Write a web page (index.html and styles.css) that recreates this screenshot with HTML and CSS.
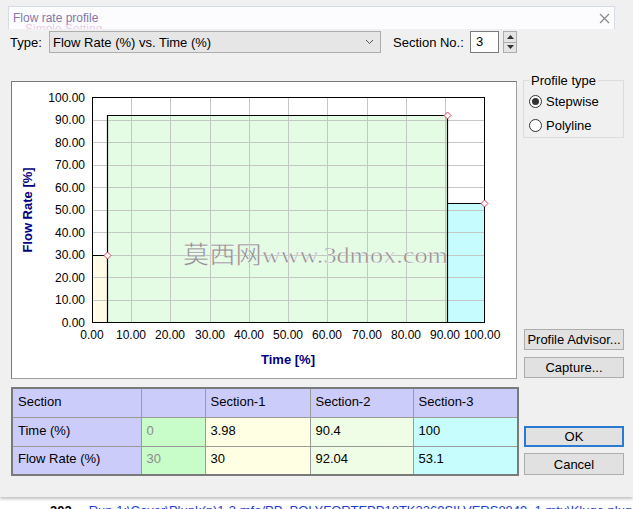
FILE: index.html
```html
<!DOCTYPE html>
<html lang="en">
<head>
    <meta charset="UTF-8">
    <title>Flow rate profile</title>
    <link rel="stylesheet" href="styles.css">
</head>
<body>
    <div class="dialog">
        <div class="titlebar">
            <span class="title">Flow rate profile</span>
            <span class="ghost">Simple Setting...</span>
            <svg class="close" width="11" height="11" viewBox="0 0 11 11">
                <path d="M1 1 L10 10 M10 1 L1 10" stroke="#8a8a8a" stroke-width="1.2" fill="none"/>
            </svg>
        </div>

        <div class="toolbar">
            <span class="type-label">Type:</span>
            <div class="combo">
                <span>Flow Rate (%) vs. Time (%)</span>
                <svg width="9" height="6" viewBox="0 0 9 6">
                    <path d="M1 1 L4.5 4.5 L8 1" stroke="#555" stroke-width="1" fill="none"/>
                </svg>
            </div>
            <span class="sec-label">Section No.:</span>
            <div class="spin-input">3</div>
            <div class="spin">
                <div class="spin-btn"><svg width="7" height="4" viewBox="0 0 7 4"><path d="M0 4 L3.5 0 L7 4 Z" fill="#333"/></svg></div>
                <div class="spin-btn"><svg width="7" height="4" viewBox="0 0 7 4"><path d="M0 0 L3.5 4 L7 0 Z" fill="#333"/></svg></div>
            </div>
        </div>

        <div class="main">
            <div class="left">
                <div class="chart">
                    <svg width="504" height="296" viewBox="0 0 504 296">
                        <!-- section fills -->
                        <rect x="80.5" y="173.5" width="15" height="67" fill="#fffbe4"/>
                        <rect x="95.5" y="33.5" width="340" height="207" fill="#e4fce4"/>
                        <rect x="435.5" y="121.5" width="37" height="119" fill="#c6fcfe"/>

                        <!-- grid -->
                        <g stroke="#c4c8c4" stroke-width="1">
                            <path d="M119.5 15.5 V240.5 M158.5 15.5 V240.5 M198.5 15.5 V240.5 M237.5 15.5 V240.5 M276.5 15.5 V240.5 M315.5 15.5 V240.5 M355.5 15.5 V240.5 M394.5 15.5 V240.5 M433.5 15.5 V240.5"/>
                            <path d="M80.5 38.5 H472.5 M80.5 60.5 H472.5 M80.5 83.5 H472.5 M80.5 105.5 H472.5 M80.5 128.5 H472.5 M80.5 150.5 H472.5 M80.5 173.5 H472.5 M80.5 195.5 H472.5 M80.5 218.5 H472.5"/>
                        </g>

                        <!-- watermark -->
                        <text class="watermark" x="171" y="181" textLength="265" lengthAdjust="spacingAndGlyphs">莫西网www.3dmox.com</text>

                        <!-- step outlines -->
                        <g fill="none" stroke="#000" stroke-width="1.2">
                            <path d="M80.5 173.5 H95.5 V240.5"/>
                            <path d="M95.5 173.5 V33.5 H435.5 V240.5"/>
                            <path d="M435.5 121.5 H472.5"/>
                        </g>
                        <rect x="80.5" y="15.5" width="392" height="225" fill="none" stroke="#000" stroke-width="1"/>

                        <!-- markers -->
                        <g fill="#fff" stroke="#d9405c" stroke-width="1">
                            <polygon points="95.5,170 99,173.5 95.5,177 92,173.5"/>
                            <polygon points="435.5,30 439,33.5 435.5,37 432,33.5"/>
                            <polygon points="472.5,118 476,121.5 472.5,125 469,121.5"/>
                        </g>

                        <!-- y axis labels -->
                        <g class="tick" text-anchor="end">
                            <text x="73" y="20">100.00</text>
                            <text x="73" y="42">90.00</text>
                            <text x="73" y="65">80.00</text>
                            <text x="73" y="87">70.00</text>
                            <text x="73" y="110">60.00</text>
                            <text x="73" y="132">50.00</text>
                            <text x="73" y="155">40.00</text>
                            <text x="73" y="177">30.00</text>
                            <text x="73" y="200">20.00</text>
                            <text x="73" y="222">10.00</text>
                            <text x="73" y="245">0.00</text>
                        </g>

                        <!-- x axis labels -->
                        <g class="tick" text-anchor="middle">
                            <text x="80" y="257">0.00</text>
                            <text x="119" y="257">10.00</text>
                            <text x="158" y="257">20.00</text>
                            <text x="198" y="257">30.00</text>
                            <text x="237" y="257">40.00</text>
                            <text x="276" y="257">50.00</text>
                            <text x="315" y="257">60.00</text>
                            <text x="355" y="257">70.00</text>
                            <text x="394" y="257">80.00</text>
                            <text x="433" y="257">90.00</text>
                            <text x="470" y="257">100.00</text>
                        </g>

                        <text class="axis-title" x="276" y="282" text-anchor="middle">Time [%]</text>
                        <text class="axis-title" text-anchor="middle" transform="translate(20 128) rotate(-90)">Flow Rate [%]</text>
                    </svg>
                </div>

                <table class="sections">
                    <colgroup>
                        <col class="c-name"><col class="c-start"><col class="c-s1"><col class="c-s2"><col class="c-s3">
                    </colgroup>
                    <tr class="head">
                        <td>Section</td><td></td><td>Section-1</td><td>Section-2</td><td>Section-3</td>
                    </tr>
                    <tr>
                        <td class="name">Time (%)</td>
                        <td class="start">0</td>
                        <td class="s1">3.98</td>
                        <td class="s2">90.4</td>
                        <td class="s3">100</td>
                    </tr>
                    <tr>
                        <td class="name">Flow Rate (%)</td>
                        <td class="start">30</td>
                        <td class="s1">30</td>
                        <td class="s2">92.04</td>
                        <td class="s3">53.1</td>
                    </tr>
                </table>
            </div>

            <div class="right">
                <fieldset class="group">
                    <legend>Profile type</legend>
                    <div class="radio-row"><span class="radio checked"></span>Stepwise</div>
                    <div class="radio-row"><span class="radio"></span>Polyline</div>
                </fieldset>
                <button class="btn advisor">Profile Advisor...</button>
                <button class="btn capture">Capture...</button>
                <button class="btn ok">OK</button>
                <button class="btn cancel">Cancel</button>
            </div>
        </div>
    </div>

    <div class="footer">
        <b>302</b><span class="link">Run 1:\Cover\Plunk(p)1-3.mfe/PP_POLYFORTEPP18TK3369SILVERS8849_1.mtu\Kluge plug 1-3_4.mus</span>
    </div>
</body>
</html>
```

FILE: styles.css
```css
body {
    margin: 0;
    width: 633px;
    height: 509px;
    overflow: hidden;
    background-color: #fff;
    font-family: "Liberation Sans", Arial, sans-serif;
    font-size: 13px;
    color: #000;
}

.dialog {
    height: 497px;
    box-sizing: border-box;
    padding-top: 6px;
    background-color: #f0f0f0;
    box-shadow: 0 2px 3px rgba(0, 0, 0, 0.25);
}

.titlebar {
    position: relative;
    overflow: hidden;
    margin-left: 8px;
    width: 607px;
    height: 23px;
    box-sizing: border-box;
    padding-left: 4px;
    display: flex;
    align-items: center;
    background-color: #fcfcfe;
    border: 1px solid #d6dce6;
    border-bottom: none;
}

.title {
    font-size: 12px;
    color: #8477a6;
}

.ghost {
    position: absolute;
    left: 16px;
    top: 15px;
    font-size: 12px;
    color: rgba(200, 130, 180, 0.4);
}

.close {
    position: absolute;
    right: 4px;
    top: 6px;
}

.toolbar {
    display: flex;
    align-items: center;
    height: 22px;
    margin-top: 2px;
    padding-left: 10px;
}

.type-label {
    width: 39px;
}

.combo {
    width: 332px;
    height: 22px;
    box-sizing: border-box;
    padding: 0 6px 0 3px;
    display: flex;
    align-items: center;
    justify-content: space-between;
    background-color: #e6e6e6;
    border: 1px solid #adadad;
}

.sec-label {
    margin-left: 12px;
    width: 77px;
}

.spin-input {
    width: 29px;
    height: 22px;
    box-sizing: border-box;
    padding-left: 5px;
    line-height: 20px;
    background-color: #fff;
    border: 1px solid #7a7a7a;
}

.spin {
    margin-left: 4px;
    width: 14px;
    height: 22px;
    display: flex;
    flex-direction: column;
}

.spin-btn {
    flex: 1;
    display: flex;
    align-items: center;
    justify-content: center;
    background-color: #e4e4e4;
    border: 1px solid #adadad;
}

.spin-btn + .spin-btn {
    border-top: none;
}

.main {
    display: flex;
    align-items: flex-start;
    margin-top: 28px;
    padding-left: 11px;
}

.left {
    width: 506px;
}

.chart {
    height: 298px;
    box-sizing: border-box;
    background-color: #fff;
    border: 1px solid #a0a0a0;
    border-top-color: #7a7a7a;
    border-left-color: #7a7a7a;
}

.chart svg {
    display: block;
}

.tick {
    font-family: "Liberation Sans", Arial, sans-serif;
    font-size: 12px;
    fill: #000;
}

.axis-title {
    font-family: "Liberation Sans", Arial, sans-serif;
    font-size: 13px;
    font-weight: bold;
    fill: #000080;
}

.watermark {
    font-family: "Liberation Serif", "Noto Sans CJK SC", serif;
    font-size: 24px;
    fill: #8e8e8e;
    stroke: #fff;
    stroke-width: 0.4;
}

.sections {
    margin-top: 8px;
    width: 506px;
    table-layout: fixed;
    border-collapse: collapse;
    border: 2px solid #7a7a7a;
}

.sections td {
    height: 29px;
    padding: 0 0 3px 5px;
    box-sizing: border-box;
    border: 1px solid #9a9a9a;
}

.c-name { width: 129px; }
.c-start { width: 64px; }
.c-s1 { width: 105px; }
.c-s2 { width: 103px; }
.c-s3 { width: 105px; }

.head td,
.sections .name {
    background-color: #ccccfb;
}

.sections .start {
    background-color: #c8fcc8;
    color: #8c8c8c;
}

.sections .s1 {
    background-color: #ffffe4;
}

.sections .s2 {
    background-color: #effde6;
}

.sections .s3 {
    background-color: #c8fdfe;
}

.right {
    display: flex;
    flex-direction: column;
    margin-left: 6px;
    margin-top: -7px;
    width: 101px;
}

.group {
    margin: 0;
    height: 64px;
    box-sizing: border-box;
    padding: 2px 0 0 5px;
    border: 1px solid #dcdcdc;
}

.group legend {
    padding: 0 2px;
    line-height: 13px;
}

.radio-row {
    display: flex;
    align-items: center;
    height: 24px;
}

.radio {
    width: 11px;
    height: 11px;
    margin-right: 4px;
    border: 1px solid #333;
    border-radius: 50%;
    background-color: #fff;
    display: flex;
    align-items: center;
    justify-content: center;
}

.radio.checked::after {
    content: "";
    width: 7px;
    height: 7px;
    border-radius: 50%;
    background-color: #333;
}

.btn {
    width: 100px;
    height: 21px;
    margin-left: 1px;
    padding: 0;
    font-family: "Liberation Sans", Arial, sans-serif;
    font-size: 13px;
    color: #000;
    background-color: #e1e1e1;
    border: 1px solid #adadad;
}

.advisor {
    margin-top: 191px;
}

.capture {
    margin-top: 7px;
}

.ok {
    margin-top: 48px;
    border: 2px solid #2a7ad2;
}

.cancel {
    margin-top: 6px;
    height: 22px;
}

.footer {
    height: 12px;
    overflow: hidden;
    padding: 6px 0 0 50px;
    line-height: 15px;
    white-space: nowrap;
}

.footer .link {
    margin-left: 17px;
    color: #1a3ccf;
}
```
